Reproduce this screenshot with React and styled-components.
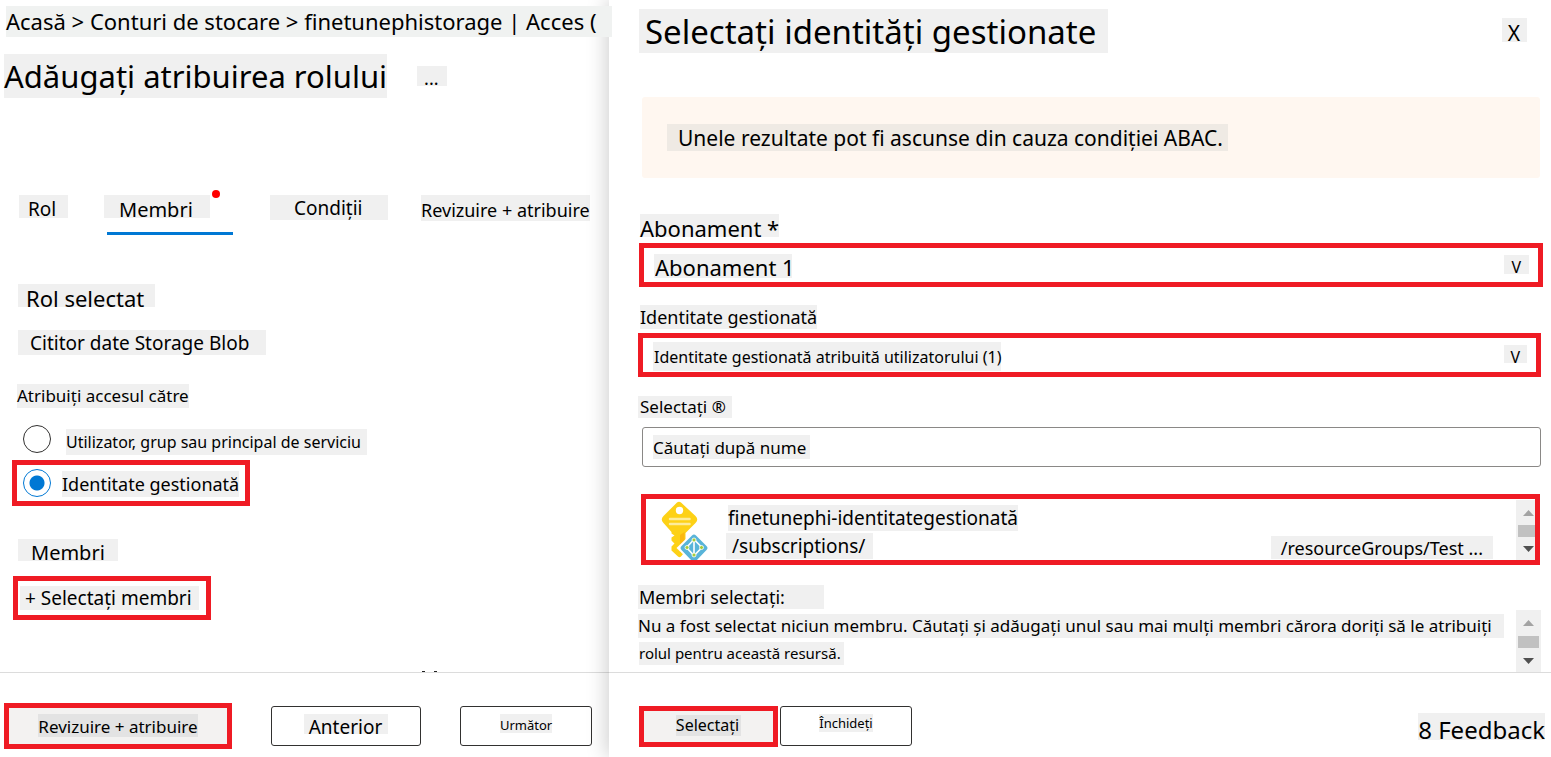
import React from "react";
import styled, { createGlobalStyle, css } from "styled-components";

const RED = "#ef1b24";
const CHIP = "#f0f0f0";
const BLUE = "#0078d4";

const GlobalStyle = createGlobalStyle`
  *, *::before, *::after { box-sizing: border-box; }
  body {
    margin: 0;
    background: #fff;
    color: #000;
    font-family: "Noto Sans", "Open Sans", sans-serif;
  }
  h1, h2, h3, p, ul { margin: 0; padding: 0; font-weight: 400; }
  button, input, select { font-family: inherit; color: inherit; }
`;

/* Grey-backed text label */
const Label = styled.span`
  display: block;
  width: fit-content;
  white-space: nowrap;
  font-size: ${(p) => p.$size || 18}px;
  height: ${(p) => p.$h || 24}px;
  line-height: ${(p) => (p.$h || 24) - (p.$drop || 0)}px;
  padding: ${(p) => p.$drop || 0}px ${(p) => p.$right || 0}px 0 ${(p) => p.$left || 0}px;
  background: ${(p) => p.$bg || CHIP};
`;

const Layout = styled.div`
  display: grid;
  grid-template-columns: minmax(0, 609fr) minmax(0, 942fr);
  min-height: 100vh;
`;

const Pane = styled.main`
  display: flex;
  flex-direction: column;
`;

const Panel = styled.aside`
  display: flex;
  flex-direction: column;
  background: #fff;
  box-shadow: -2px 0 20px rgba(0, 0, 0, 0.2);
  clip-path: inset(0 0 0 -30px);
`;

const Content = styled.div`
  flex: 1;
  display: flex;
  flex-direction: column;
`;

const Breadcrumb = styled.nav`
  position: relative;
  z-index: 1;
  padding: 6px 0 0 6px;

  a { color: inherit; text-decoration: none; }
`;

const TitleRow = styled.header`
  display: flex;
  gap: 30px;
  padding: 17px 0 0 4px;
`;

const PlainButton = styled.button`
  padding: 0;
  border: 0;
  background: none;
  text-align: left;
  cursor: pointer;
`;

const MoreButton = styled(PlainButton)`
  margin-top: 12px;
  align-self: flex-start;
`;

const Tabs = styled.div`
  display: flex;
  align-items: flex-start;
  margin-top: 96px;
  padding-left: 19px;
  height: 42px;
`;

const Tab = styled(PlainButton)`
  position: relative;
  flex: none;
  width: ${(p) => p.$width}px;
  height: 42px;
  display: flex;
  align-items: flex-start;
  padding-top: 1px;

  ${(p) =>
    p.$active &&
    css`
      &::before {
        content: "";
        position: absolute;
        top: -4px;
        left: 108px;
        width: 8px;
        height: 8px;
        border-radius: 50%;
        background: #f00;
      }
      &::after {
        content: "";
        position: absolute;
        bottom: 1px;
        left: 3px;
        width: 126px;
        height: 3px;
        background: ${BLUE};
      }
    `}
`;

const Section = styled.section`
  padding-left: 18px;
  margin-top: ${(p) => p.$top}px;
  display: flex;
  flex-direction: column;
  align-items: flex-start;
  gap: ${(p) => p.$gap || 0}px;
`;

const RadioGroup = styled.fieldset`
  border: 0;
  margin: 29px 0 0;
  padding: 0 0 0 12px;
  min-width: 0;
  display: flex;
  flex-direction: column;
  align-items: flex-start;

  legend { padding: 0 0 0 5px; }
`;

const RadioRow = styled.label`
  display: flex;
  align-items: center;
  height: 52px;
  padding: 10px 6px 0;
  gap: 15px;
  border: 5px solid transparent;

  > span { margin-top: 6px; }

  ${(p) =>
    p.$marked &&
    css`
      height: 46px;
      padding-top: 0;
      gap: 11px;
      border-color: ${RED};

      > span { margin-top: 2px; }
    `}
`;

const Radio = styled.input`
  appearance: none;
  flex: none;
  width: 28px;
  height: 28px;
  margin: 0;
  border: 1px solid #323130;
  border-radius: 50%;

  &:checked {
    border-color: ${BLUE};
    background: radial-gradient(circle, ${BLUE} 7px, transparent 8px);
  }
`;

const AddButton = styled.button`
  align-self: flex-start;
  margin: 15px 0 0 13px;
  height: 44px;
  padding: 4px 7px 5px 2px;
  border: 5px solid ${RED};
  background: #fff;
  cursor: pointer;
`;

const ClippedRow = styled.svg`
  display: block;
  width: 16px;
  height: 2px;
  margin: auto 0 0 421px;
`;

const Footer = styled.footer`
  display: flex;
  align-items: center;
  height: 85px;
  padding: 22px 6px 0 ${(p) => p.$left}px;
  border-top: 1px solid #dcdcdc;
`;

const ActionButton = styled.button`
  flex: none;
  display: flex;
  align-items: flex-start;
  justify-content: center;
  width: ${(p) => p.$width}px;
  height: 40px;
  margin-left: ${(p) => p.$gap || 0}px;
  padding: 7px 0 0;
  border: 1px solid #323130;
  border-radius: 3px;
  background: #fff;
  cursor: pointer;

  ${(p) =>
    p.$marked &&
    css`
      height: ${p.$height}px;
      padding-top: ${p.$height > 42 ? 6 : 4}px;
      border: 5px solid ${RED};
      border-radius: 0;
      background: #f3f2f1;
    `}
`;

const PanelHeader = styled.header`
  display: flex;
  justify-content: space-between;
  padding: 9px 24px 0 30px;

  button { align-self: flex-start; margin-top: 9px; }
`;

const Banner = styled.div`
  margin: 44px 11px 36px 33px;
  padding: 27px 25px;
  border-radius: 3px;
  background: #fff7f0;
`;

const Field = styled.div`
  padding: 0 ${(p) => p.$right || 10}px 0 29px;
  margin-bottom: ${(p) => p.$bottom}px;
`;

const FieldLabel = styled.label`
  display: block;
  width: fit-content;
  padding-left: ${(p) => p.$inset || 0}px;
  margin-bottom: ${(p) => p.$gap}px;
`;

const SelectBox = styled.div`
  display: grid;
  height: 44px;
  margin-left: ${(p) => p.$inset || 0}px;
  border: 5px solid ${RED};

  > * { grid-area: 1 / 1; }
`;

const Select = styled.select`
  appearance: none;
  width: 100%;
  height: 34px;
  padding: ${(p) => p.$drop}px 40px 0 11px;
  border: 0;
  outline: 0;
  border-radius: 0;
  font-size: ${(p) => p.$size}px;
  background: linear-gradient(${CHIP}, ${CHIP}) no-repeat 10px ${(p) => p.$chipTop}px /
    ${(p) => p.$chipWidth}px ${(p) => p.$chipHeight}px;
`;

const Arrow = styled.span`
  justify-self: end;
  align-self: start;
  margin: 7px 9px 0 0;
  pointer-events: none;
`;

const SearchInput = styled.input`
  display: block;
  width: calc(100% - 4px);
  height: 40px;
  margin-left: 4px;
  padding: 0 10px;
  border: 1px solid #8a8886;
  border-radius: 3px;
  outline: 0;
  font-size: 17px;
  background: linear-gradient(${CHIP}, ${CHIP}) no-repeat 10px 7px / 157px 24px;

  &::placeholder { color: #000; opacity: 1; }
`;

const ResultList = styled.div`
  display: flex;
  height: 71px;
  margin: 27px 11px 20px 32px;
  border: 5px solid ${RED};
  overflow: hidden;
`;

const KeyIcon = styled.svg`
  flex: none;
  width: 52px;
  height: 61px;
  margin-left: 14px;
`;

const ResultText = styled.div`
  flex: 1;
  min-width: 0;
  display: flex;
  flex-direction: column;
  gap: 2px;
  padding: 6px 23px 0 14px;

  > :first-child { margin-left: 2px; }
`;

const PathRow = styled.div`
  display: flex;
  justify-content: space-between;

  > :last-child { margin-top: 3px; }
`;

const ScrollTrack = styled.div`
  flex: none;
  display: flex;
  flex-direction: column;
  align-items: flex-start;
  justify-content: space-between;
  width: ${(p) => p.$width}px;
  height: ${(p) => p.$height}px;
  padding: 10px 0 8px;
  background: ${CHIP};
  align-self: flex-end;
  overflow: hidden;

  svg { display: block; width: 25px; height: 6px; flex: none; }
`;

const ScrollThumb = styled.div`
  flex: none;
  width: 21px;
  height: 12px;
  margin-left: 2px;
  background: #c1c1c1;
`;

const Selected = styled.section`
  display: flex;
  justify-content: space-between;
  padding: 0 10px 0 29px;
`;

const SelectedText = styled.div`
  padding-bottom: 7px;

  > :nth-child(2) { margin-top: 5px; }
  > :nth-child(3) { margin: 4px 0 0 1px; }
`;

const Feedback = styled.a`
  margin-left: auto;
  color: inherit;
  text-decoration: none;
`;

function Scrollbar({ width, height }) {
  return (
    <ScrollTrack $width={width} $height={height} aria-hidden="true">
      <svg viewBox="0 0 25 6">
        <path d="M7 6 12.500 0 18 6z" fill="#a3a3a3" />
      </svg>
      <ScrollThumb />
      <svg viewBox="0 0 25 6">
        <path d="M7 0h11L12.500 6z" fill="#505050" />
      </svg>
    </ScrollTrack>
  );
}

function ManagedIdentityIcon() {
  return (
    <KeyIcon viewBox="0 0 52 61" aria-hidden="true">
      <path
        d="M21 3.500 35.500 17q3.500 3.500 0 7L25.500 34v18L21 57.500q-1.500 1.500-3 0l-6.500-6v-4l3-3-3-3v-3l3-2-3-2V33L3.500 24q-3.500-3.500 0-7L17 3.500q2-1.700 4 0z"
        fill="#fdd116"
      />
      <path d="M20 36l4.500-3v17L20 54z" fill="#fbb80f" />
      <circle cx="19.500" cy="11.500" r="3.700" fill="#fff" />
      <path d="M10 20h19.500M10 25h19.500" stroke="#fdec9b" strokeWidth="2.500" strokeLinecap="round" />
      <path d="M34 32 52 49 36 65h-3L16.500 49z" fill="#fff" />
      <path d="M32 36.500q2-2 4 0L46.500 47q2 2 0 4L36 62h-4L21.500 51q-2-2 0-4z" fill="#59b4d9" />
      <path d="M34 40.500v16M34 40.500 26.500 48.500l7.500 8 8-8z" fill="none" stroke="#fff" strokeWidth="1.600" />
      <g fill="#a5cd39" stroke="#fff" strokeWidth=".8">
        <circle cx="34" cy="41" r="2" />
        <circle cx="27" cy="48.500" r="2" />
        <circle cx="41.500" cy="48.500" r="2" />
        <circle cx="34" cy="56" r="2" />
      </g>
    </KeyIcon>
  );
}

export default function App() {
  const [assignee, setAssignee] = React.useState("identity");

  return (
    <>
      <GlobalStyle />
      <Layout>
        <Pane>
          <Content>
            <Breadcrumb>
              <Label $size={22} $h={31} $bg="#f0f2f1" $right={15}>
                <a href="#home">Acasă</a> &gt; <a href="#accounts">Conturi de stocare</a> &gt;{" "}
                <a href="#storage">finetunephistorage | Acces (</a>
              </Label>
            </Breadcrumb>
            <TitleRow>
              <Label as="h1" $size={31} $h={44}>
                Adăugați atribuirea rolului
              </Label>
              <MoreButton type="button">
                <Label $size={18} $h={20} $drop={5} $left={7} $right={8}>...</Label>
              </MoreButton>
            </TitleRow>

            <Tabs role="tablist">
              <Tab type="button" role="tab" $width={85}>
                <Label $size={19} $h={23} $drop={6} $left={9} $right={12}>Rol</Label>
              </Tab>
              <Tab type="button" role="tab" aria-selected="true" $active $width={166}>
                <Label $size={20} $h={23} $drop={6} $left={15} $right={17}>Membri</Label>
              </Tab>
              <Tab type="button" role="tab" $width={151}>
                <Label $size={19} $h={25} $drop={2} $left={24} $right={25}>Condiții</Label>
              </Tab>
              <Tab type="button" role="tab" $width={170}>
                <Label $size={18} $h={26} $drop={4}>Revizuire + atribuire</Label>
              </Tab>
            </Tabs>

            <Section $top={48} $gap={23}>
              <Label as="h2" $size={22} $h={23} $drop={5} $left={8} $right={11}>Rol selectat</Label>
              <Label as="p" $size={19} $h={25} $drop={2} $left={12} $right={17}>Cititor date Storage Blob</Label>
            </Section>

            <RadioGroup>
              <legend><Label $size={17}>Atribuiți accesul către</Label></legend>
              <RadioRow>
                <Radio
                  type="radio"
                  name="assignee"
                  checked={assignee === "user"}
                  onChange={() => setAssignee("user")}
                />
                <Label $size={16} $h={26} $right={6}>Utilizator, grup sau principal de serviciu</Label>
              </RadioRow>
              <RadioRow $marked>
                <Radio
                  type="radio"
                  name="assignee"
                  checked={assignee === "identity"}
                  onChange={() => setAssignee("identity")}
                />
                <Label $size={18} $h={26}>Identitate gestionată</Label>
              </RadioRow>
            </RadioGroup>

            <Section $top={33}>
              <Label as="h2" $size={20} $h={22} $drop={5} $left={13} $right={13}>Membri</Label>
            </Section>
            <AddButton type="button">
              <Label $size={19} $left={5} $right={7}>+ Selectați membri</Label>
            </AddButton>
            <ClippedRow viewBox="0 0 16 2" aria-hidden="true">
              <path d="M1 1h3v1H1zM13 1h3v1h-3z" fill="#222" />
            </ClippedRow>
          </Content>

          <Footer $left={4}>
            <ActionButton type="button" $marked $width={228} $height={46}>
              <Label $size={17} $h={23} $drop={3} $bg="#e3e3e3">Revizuire + atribuire</Label>
            </ActionButton>
            <ActionButton type="button" $width={150} $gap={39}>
              <Label $size={19} $h={20} $drop={6} $left={5} $right={6}>Anterior</Label>
            </ActionButton>
            <ActionButton type="button" $width={132} $gap={39}>
              <Label $size={13} $h={19} $drop={3}>Următor</Label>
            </ActionButton>
          </Footer>
        </Pane>

        <Panel>
          <Content>
            <PanelHeader>
              <Label as="h1" $size={33} $h={44} $drop={2} $left={6} $right={12}>Selectați identități gestionate</Label>
              <PlainButton type="button" aria-label="Închideți panoul">
                <Label $size={21} $h={24} $drop={6} $left={6} $right={7}>X</Label>
              </PlainButton>
            </PanelHeader>

            <Banner role="status">
              <Label $size={21} $h={27} $drop={2} $left={11} $right={5} $bg="#efeae4">
                Unele rezultate pot fi ascunse din cauza condiției ABAC.
              </Label>
            </Banner>

            <Field $right={8} $bottom={18}>
              <FieldLabel htmlFor="subscription" $inset={2} $gap={6}>
                <Label $size={22} $h={23} $drop={5}>Abonament *</Label>
              </FieldLabel>
              <SelectBox $inset={1}>
                <Select id="subscription" $size={22} $drop={3} $chipTop={6} $chipWidth={138} $chipHeight={24}>
                  <option>Abonament 1</option>
                </Select>
                <Arrow aria-hidden="true">
                  <Label $size={16} $h={19} $drop={5} $left={7} $right={8}>V</Label>
                </Arrow>
              </SelectBox>
            </Field>

            <Field $bottom={19}>
              <FieldLabel htmlFor="identity" $inset={2} $gap={4}>
                <Label $size={18}>Identitate gestionată</Label>
              </FieldLabel>
              <SelectBox>
                <Select id="identity" $size={16} $drop={3} $chipTop={4} $chipWidth={348} $chipHeight={29}>
                  <option>Identitate gestionată atribuită utilizatorului (1)</option>
                </Select>
                <Arrow aria-hidden="true">
                  <Label $size={16} $h={18} $drop={6} $left={6} $right={7}>V</Label>
                </Arrow>
              </SelectBox>
            </Field>

            <Field $bottom={0}>
              <FieldLabel htmlFor="search" $gap={9}>
                <Label $size={17} $h={22} $left={2} $right={6}>Selectați ®</Label>
              </FieldLabel>
              <SearchInput id="search" type="text" placeholder="Căutați după nume" />
            </Field>

            <ResultList>
              <ManagedIdentityIcon />
              <ResultText>
                <Label $size={19} $h={26}>finetunephi-identitategestionată</Label>
                <PathRow>
                  <Label $size={19} $h={26} $left={6} $right={8}>/subscriptions/</Label>
                  <Label $size={18} $h={23} $drop={2} $left={10} $right={10}>/resourceGroups/Test ...</Label>
                </PathRow>
              </ResultText>
              <Scrollbar width={19} height={60} />
            </ResultList>

            <Selected>
              <SelectedText>
                <Label as="h2" $size={18} $left={1} $right={39}>Membri selectați:</Label>
                <Label $size={17} $right={12}>
                  Nu a fost selectat niciun membru. Căutați și adăugați unul sau mai mulți membri cărora doriți să le atribuiți
                </Label>
                <Label $size={15} $h={23} $right={3}>rolul pentru această resursă.</Label>
              </SelectedText>
              <Scrollbar width={25} height={62} />
            </Selected>
          </Content>

          <Footer $left={30}>
            <ActionButton type="button" $marked $width={139} $height={41}>
              <Label $size={16} $h={21} $right={2} $bg="#e3e3e3">Selectați</Label>
            </ActionButton>
            <ActionButton type="button" $width={132} $gap={2}>
              <Label $size={13} $h={18}>Închideți</Label>
            </ActionButton>
            <Feedback href="#feedback">
              <Label $size={24} $h={27} $drop={7}>8 Feedback</Label>
            </Feedback>
          </Footer>
        </Panel>
      </Layout>
    </>
  );
}
